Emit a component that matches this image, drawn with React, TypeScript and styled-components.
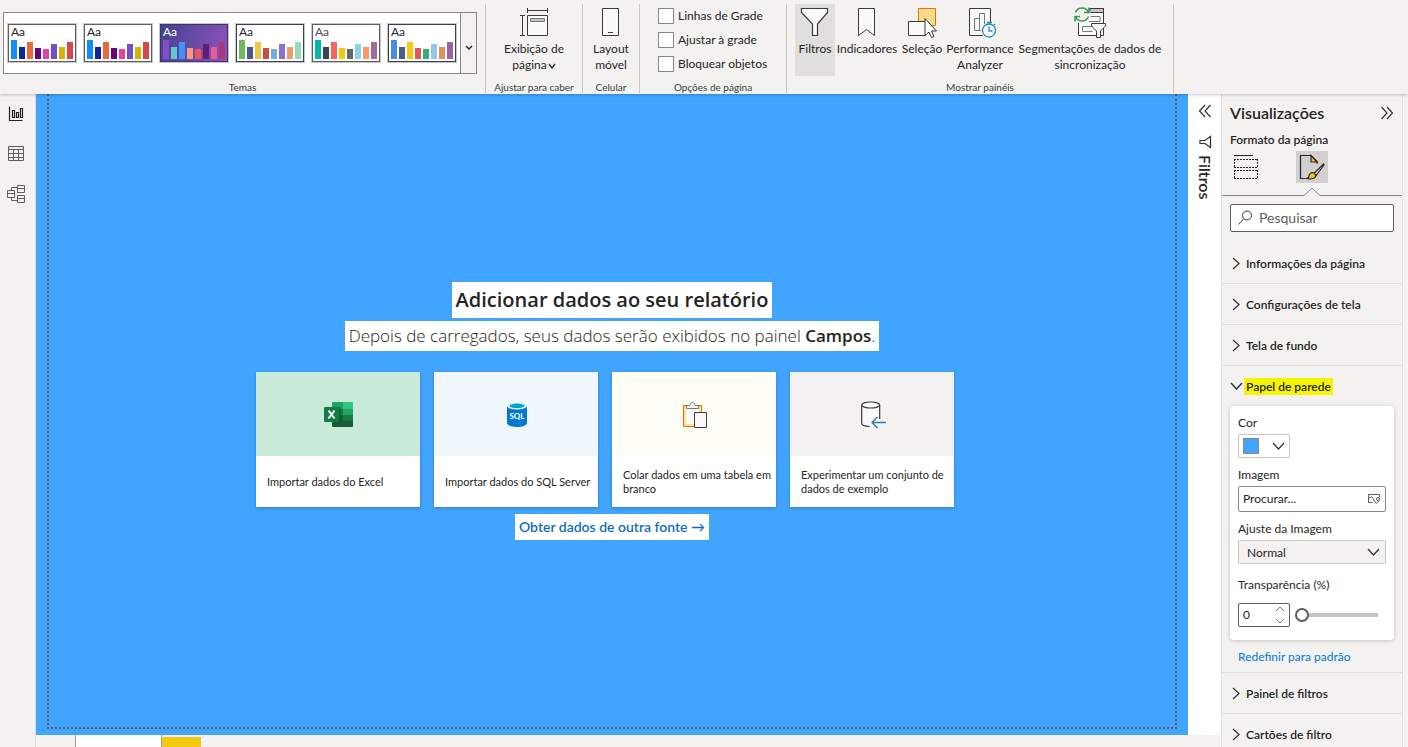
import React, { useState } from "react";
import styled, { createGlobalStyle } from "styled-components";

const GlobalStyle = createGlobalStyle`
  *, *::before, *::after { box-sizing: border-box; }
  body {
    margin: 0;
    background: #f3f2f1;
    color: #252423;
    font-family: Lato, "Open Sans", sans-serif;
    font-size: 12px;
    line-height: 16px;
  }
  button, input, select { font: inherit; color: inherit; margin: 0; }
  button { padding: 0; border: 0; background: none; cursor: pointer; }
  h1, h2, h3, p { margin: 0; font: inherit; }
  svg { display: block; flex: none; }
`;

/* ---------- shell ---------- */

const Shell = styled.div`
  display: flex;
  flex-direction: column;
  height: 100vh;
  overflow: hidden;
`;

const Ribbon = styled.header`
  display: flex;
  flex: none;
  height: 94px;
  padding: 4px 0 1px;
  background: #f3f2f1;
  box-shadow: 0 1px 3px rgba(0, 0, 0, 0.22);
  z-index: 1;
`;

const Workspace = styled.div`
  display: flex;
  flex: 1;
  min-height: 0;
`;

/* ---------- ribbon ---------- */

const Group = styled.section<{ $width: number }>`
  display: flex;
  flex-direction: column;
  flex: none;
  width: ${(p) => p.$width}px;
  border-right: 1px solid #c8c6c4;
`;

const GroupBody = styled.div<{ $pad?: number }>`
  display: flex;
  flex: 1;
  justify-content: center;
  align-items: flex-start;
  padding: 0 ${(p) => p.$pad ?? 0}px;
`;

const GroupTitle = styled.h2`
  height: 12px;
  font-size: 10px;
  line-height: 12px;
  text-align: center;
  white-space: nowrap;
  color: #3b3a39;
`;

const Gallery = styled.div`
  display: flex;
  width: 474px;
  height: 62px;
  margin: 8px 5px 0 0;
  border: 1px solid #8a8886;
  background: #fff;
`;

const GalleryItems = styled.div`
  display: flex;
  flex: 1;
  gap: 6px;
  padding: 10px 3px;
`;

const GalleryMore = styled.button`
  display: flex;
  align-items: center;
  justify-content: center;
  width: 17px;
  padding-top: 8px;
  border-left: 1px solid #8a8886;
  background: #f3f2f1;
`;

const Thumb = styled.button<{ $bg: string; $ink: string; $frame: string }>`
  display: flex;
  flex-direction: column;
  justify-content: space-between;
  width: 70px;
  height: 40px;
  padding: 2px;
  border: 1px solid #c8c6c4;
  box-shadow: inset 0 0 0 1px ${(p) => p.$frame};
  background: ${(p) => p.$bg};
  color: ${(p) => p.$ink};
  font-size: 12px;
  line-height: 12px;
  text-align: left;
`;

const ThumbBars = styled.span`
  display: flex;
  align-items: flex-end;
  gap: 2px;
  height: 20px;
  padding: 0 0 1px 1px;
`;

const ThumbBar = styled.span<{ $h: number; $c: string }>`
  width: 6px;
  height: ${(p) => p.$h}px;
  background: ${(p) => p.$c};
`;

const ThumbText = styled.span`
  height: 12px;
  padding-left: 1px;
`;

const Tool = styled.button<{ $width: number; $active?: boolean }>`
  display: flex;
  flex-direction: column;
  align-items: center;
  flex: none;
  width: ${(p) => p.$width}px;
  height: 72px;
  padding-top: 2px;
  background: ${(p) => (p.$active ? "#e1dfdd" : "transparent")};
`;

const ToolText = styled.span`
  margin-top: 3px;
  line-height: 16px;
  text-align: center;
  white-space: nowrap;

  svg { display: inline-block; margin-left: 1px; }
`;

const Checks = styled.div`
  display: flex;
  flex-direction: column;
  gap: 8px;
  flex: 1;
  min-width: 0;
  padding-top: 4px;
`;

const Check = styled.label`
  display: flex;
  align-items: center;
  gap: 4px;
  height: 16px;
  white-space: nowrap;

  input {
    appearance: none;
    width: 16px;
    height: 16px;
    border: 1px solid #8a8886;
    background: #fff;
  }
  input:checked { background: #605e5c; }
`;

/* ---------- left navigation ---------- */

const Nav = styled.nav`
  display: flex;
  flex-direction: column;
  flex: none;
  width: 36px;
  border-right: 1px solid #e1dfdd;
`;

const NavButton = styled.button`
  display: flex;
  align-items: center;
  padding-left: 6px;
  height: 40px;
`;

/* ---------- report canvas ---------- */

const Center = styled.div`
  display: flex;
  flex-direction: column;
  flex: 1;
  min-width: 0;
`;

const CenterRow = styled.div`
  display: flex;
  flex: 1;
  min-height: 0;
`;

const Canvas = styled.main`
  display: flex;
  flex: 1;
  min-width: 0;
  padding: 0 11px 6px;
  background: #41a4ff;
`;

const Page = styled.div`
  display: flex;
  flex-direction: column;
  align-items: center;
  justify-content: center;
  flex: 1;
  border: 2px dotted #605e5c;
  border-top: 0;
`;

const PageTitle = styled.h1`
  padding: 4px;
  background: #fff;
  font-family: "Open Sans", sans-serif;
  font-size: 20px;
  line-height: 28px;
  font-weight: 600;
`;

const PageLead = styled.p`
  margin-top: 3px;
  padding: 3px 4px;
  background: #fff;
  font-family: "Open Sans", sans-serif;
  font-size: 17px;
  line-height: 24px;
  font-weight: 300;

  strong { font-weight: 600; }
`;

const Cards = styled.div`
  display: flex;
  margin-top: 21px;
`;

const Card = styled.button`
  display: flex;
  flex-direction: column;
  width: 164px;
  height: 135px;
  margin-right: 14px;
  background: #fff;
  text-align: left;
  box-shadow: 0 1px 3px rgba(0, 0, 0, 0.25);
`;

const CardArt = styled.span<{ $bg: string }>`
  display: flex;
  align-items: center;
  justify-content: center;
  width: 100%;
  height: 84px;
  padding: 2px 0 0 2px;
  background: ${(p) => p.$bg};
`;

const CardText = styled.span`
  display: flex;
  align-items: center;
  flex: 1;
  padding: 1px 0 0 11px;
  font-size: 11px;
  line-height: 14px;
  white-space: pre;
`;

const SourceLink = styled.a`
  margin-top: 7px;
  padding: 4px;
  background: #fff;
  color: #0f6cbd;
  font-size: 14px;
  line-height: 18px;
  font-weight: 600;
  text-decoration: none;
`;

const TabBar = styled.footer`
  display: flex;
  flex: none;
  height: 12px;
  padding-left: 39px;
`;

const PageTab = styled.button`
  width: 87px;
  border: solid #a19f9d;
  border-width: 0 1px;
  background: #fff;
`;

const AddTab = styled.button`
  width: 39px;
  margin-top: 2px;
  background: #f2c811;
`;

/* ---------- collapsed filter pane ---------- */

const FilterRail = styled.aside`
  display: flex;
  flex-direction: column;
  align-items: center;
  flex: none;
  width: 33px;
  padding: 10px 0 0 1px;
  background: #fff;
`;

const RailTitle = styled.h2`
  margin-top: 6px;
  font-size: 16px;
  line-height: 20px;
  font-weight: 600;
  writing-mode: vertical-rl;
`;

const FilterGlyph = styled.span`
  margin-top: 17px;
`;

/* ---------- visualizations pane ---------- */

const Pane = styled.aside`
  flex: none;
  width: 182px;
  margin-right: 5px;
  border: solid #e1dfdd;
  border-width: 0 1px;
  overflow: hidden;
`;

const PaneHead = styled.div`
  display: flex;
  align-items: center;
  justify-content: space-between;
  padding: 9px 8px 0;
`;

const PaneTitle = styled.h2`
  font-size: 16px;
  line-height: 20px;
  font-weight: 600;
`;

const PaneSub = styled.p`
  padding: 9px 8px 0;
  font-weight: 600;
`;

const ModeTabs = styled.div`
  display: flex;
  gap: 34px;
  height: 48px;
  padding: 3px 8px 0;
  border-bottom: 1px solid #8a8886;
`;

const ModeTab = styled.button<{ $active?: boolean }>`
  position: relative;
  display: flex;
  align-items: center;
  justify-content: center;
  width: 32px;
  height: 32px;
  background: ${(p) => (p.$active ? "#d2d0ce" : "transparent")};
`;

const Notch = styled.span`
  position: absolute;
  left: 7px;
  top: 36px;
`;

const Search = styled.label`
  display: flex;
  align-items: center;
  gap: 6px;
  height: 28px;
  margin: 8px 8px 11px;
  padding: 0 6px;
  border: 1px solid #605e5c;
  border-radius: 2px;
  background: #fff;

  input {
    flex: 1;
    min-width: 0;
    padding: 0;
    border: 0;
    outline: 0;
    background: none;
    font-size: 14px;
  }
  input::placeholder { color: #605e5c; opacity: 1; }
`;

const Section = styled.section`
  border-bottom: 1px solid #e1dfdd;
`;

const SectionToggle = styled.button`
  display: flex;
  align-items: center;
  gap: 2px;
  width: 100%;
  height: 40px;
  padding-left: 8px;
  font-weight: 600;
  white-space: nowrap;
`;

const SectionName = styled.span<{ $marked?: boolean }>`
  padding: 1px 2px 0;
  background: ${(p) => (p.$marked ? "#f5f500" : "transparent")};
`;

const Options = styled.div`
  display: flex;
  flex-direction: column;
  gap: 9px;
  margin: 0 8px;
  padding: 9px 8px 13px;
  border-radius: 4px;
  background: #fff;
  box-shadow: 0 1px 4px rgba(0, 0, 0, 0.2);
`;

const Field = styled.div<{ $roomy?: boolean }>`
  display: flex;
  flex-direction: column;
  gap: ${(p) => (p.$roomy ? 10 : 3)}px;
  padding-top: ${(p) => (p.$roomy ? 4 : 0)}px;
`;

const ColorButton = styled.button`
  display: flex;
  align-items: center;
  justify-content: space-between;
  width: 52px;
  height: 24px;
  padding: 0 4px;
  border: 1px solid #c8c6c4;
  border-radius: 2px;
  background: #fff;
`;

const Swatch = styled.span`
  width: 16px;
  height: 16px;
  border: 1px solid #8a8886;
  background: #41a4ff;
`;

const Browse = styled.button`
  display: flex;
  align-items: center;
  justify-content: space-between;
  height: 26px;
  padding: 0 4px;
  border: 1px solid #8a8886;
  border-radius: 2px;
  background: #fff;
`;

const SelectBox = styled.div`
  display: grid;
  align-items: center;

  select {
    grid-area: 1 / 1;
    appearance: none;
    height: 24px;
    padding: 1px 8px 0;
    border: 1px solid #c8c6c4;
    border-radius: 2px;
    background: #f3f2f1;
  }
  svg {
    grid-area: 1 / 1;
    justify-self: end;
    margin-right: 6px;
    pointer-events: none;
  }
`;

const SliderRow = styled.div`
  display: flex;
  align-items: center;
  gap: 5px;
`;

const Stepper = styled.div`
  display: flex;
  align-items: center;
  width: 52px;
  height: 24px;
  padding: 0 4px;
  border: 1px solid #605e5c;
  border-radius: 2px;

  input {
    width: 32px;
    padding: 0;
    border: 0;
    outline: 0;
    appearance: textfield;
  }
  input::-webkit-inner-spin-button { appearance: none; }
`;

const Steps = styled.div`
  display: flex;
  flex-direction: column;
  gap: 6px;
`;

const Range = styled.input`
  appearance: none;
  flex: 1;
  min-width: 0;
  height: 16px;
  margin-right: 8px;
  background: none;

  &::-webkit-slider-runnable-track {
    height: 4px;
    background: #c8c6c4;
  }
  &::-webkit-slider-thumb {
    appearance: none;
    width: 14px;
    height: 14px;
    margin-top: -5px;
    border: 2px solid #605e5c;
    border-radius: 50%;
    background: #fff;
  }
`;

const ResetLink = styled.a`
  display: block;
  padding: 9px 16px 7px;
  color: #0078d4;
  text-decoration: none;
`;

/* ---------- icons ---------- */

type ChevronProps = { dir: "up" | "down" | "right"; w: number; h: number; color?: string; stroke?: number };

const Chevron = ({ dir, w, h, color = "#323130", stroke = 1.2 }: ChevronProps) => {
  const pts = {
    up: `1,${h - 1} ${w / 2},1 ${w - 1},${h - 1}`,
    down: `1,1 ${w / 2},${h - 1} ${w - 1},1`,
    right: `1,1 ${w - 1},${h / 2} 1,${h - 1}`,
  }[dir];
  return (
    <svg width={w} height={h} fill="none" stroke={color} strokeWidth={stroke}>
      <polyline points={pts} />
    </svg>
  );
};

const DoubleChevron = ({ left }: { left?: boolean }) => (
  <svg width="14" height="14" viewBox="0 0 14 14" fill="none" stroke="#323130" strokeWidth="1.2">
    <path d={left ? "M7 1L1.500 7L7 13M12.500 1L7 7L12.500 13" : "M1.500 1L7 7L1.500 13M7 1L12.500 7L7 13"} />
  </svg>
);

const Art = ({ w = 32, children }: { w?: number; children: React.ReactNode }) => (
  <svg width={w} height="32" viewBox={`0 0 ${w} 32`} fill="none" stroke="#3b3a39">
    {children}
  </svg>
);

const PageViewIcon = () => (
  <Art>
    <path d="M9.500 2v5M29.500 2v5M9.500 4.500h20M2 9.500h5M2 29.500h5M4.500 9.500v20" />
    <path fill="#fafafa" d="M9.500 9.500h20v20h-20z" />
    <path fill="#c8c6c4" stroke="#797775" d="M12.500 12.500h14v3h-14z" />
  </Art>
);

const PhoneIcon = () => (
  <Art>
    <path fill="#fafafa" d="M7.500 2.500h16v27h-16z" />
    <path d="M13 26.500h5" />
  </Art>
);

const FunnelIcon = () => (
  <Art>
    <path fill="#fafafa" strokeWidth="1.2" d="M2.500 2.500h26v4L18.500 18v11.500h-5V18L2.500 6.500z" />
  </Art>
);

const BookmarkIcon = () => (
  <Art>
    <path fill="#fafafa" d="M7.500 2.500h16v27l-8-6-8 6z" />
  </Art>
);

const SelectionIcon = () => (
  <Art>
    <path fill="#f8db8f" stroke="#e07000" d="M12.500 2.500h17v17h-17z" />
    <path fill="#fafafa" d="M2.500 15.500h17v14h-17z" />
    <path fill="#fff" d="M19 12.500v17l4-3.500 2.500 5.500 2.500-1-2.500-5.500h5z" />
  </Art>
);

const PerformanceIcon = () => (
  <Art>
    <path fill="#fafafa" d="M5.500 2.500h21v27h-21z" />
    <path stroke="#797775" d="M10.500 24.500v-12h5v12zM15.500 24.500v-17h5v17z" />
    <circle cx="25" cy="24.500" r="8" fill="#fafafa" stroke="none" />
    <circle cx="25" cy="24.500" r="6.500" stroke="#1e8bcd" strokeWidth="1.300" />
    <path stroke="#1e8bcd" strokeWidth="1.300" d="M23 16.500h5M25.500 16.500v2M25 20.500v4.500h3.500M29.500 19.500l1.500-1.500" />
  </Art>
);

const SyncIcon = () => (
  <Art w={34}>
    <path fill="#fafafa" d="M5.500 2.500h25v27h-25z" />
    <path fill="#c8c6c4" d="M17 2.500h13.500v4H17z" />
    <path stroke="#797775" d="M17 10.500h10v5H16M22 20.500H9.500v5h10" />
    <circle cx="9" cy="8.500" r="9" fill="#f3f2f1" stroke="none" />
    <path stroke="#2f9e4f" strokeWidth="1.500" d="M2.500 6.500A7 7 0 0 1 15.500 6.500M15.500 10.500A7 7 0 0 1 2.500 10.500M16 1.500v5h-5M2 15.500v-5h5" />
    <path fill="#fafafa" d="M18.500 17.500h14v2.500l-5 5v6.500h-4V25l-5-5z" />
  </Art>
);

const ReportIcon = () => (
  <svg width="18" height="18" fill="none" stroke="#252423" strokeWidth="1.200">
    <path d="M3.500 1.500v14h13M6.500 5.500h2v7h-2zM10.500 7.500h2v5h-2zM14.500 3.500h2v9h-2z" />
  </svg>
);

const TableIcon = () => (
  <svg width="18" height="18" fill="none" stroke="#605e5c">
    <path d="M2.500 1.500h15v14h-15zM2.500 4.500h15M2.500 8.500h15M2.500 12.500h15M7.500 4.500v11M12.500 4.500v11" />
  </svg>
);

const ModelIcon = () => (
  <svg width="20" height="20" fill="none" stroke="#605e5c">
    <path d="M1.500 6.500h7v7h-7zM1.500 9.500h7M11.500 1.500h7v7h-7zM11.500 4.500h7M11.500 11.500h7v7h-7zM11.500 14.500h7M5.500 6.500v-3h6M5.500 13.500v3h6" />
  </svg>
);

const ExcelIcon = () => (
  <svg width="30" height="26" viewBox="0 0 30 26">
    <path fill="#21a366" d="M8 1q0-1 1-1h10v7H8z" />
    <path fill="#33c481" d="M19 0h9q1 0 1 1v6H19z" />
    <path fill="#107c41" d="M8 7h11v6H8zM19 13h10v6H19z" />
    <path fill="#21a366" d="M19 7h10v6H19z" />
    <path fill="#185c37" d="M8 13h11v6h10v5q0 1-1 1H9q-1 0-1-1z" />
    <path fill="#0b5a2e" opacity=".6" d="M8 5h8q1 0 1 1v14q0 1-1 1H8z" />
    <rect y="5" width="15" height="15" rx="1" fill="#107c41" />
    <path stroke="#fff" strokeWidth="2" d="M4.500 8.500l6 8M10.500 8.500l-6 8" />
  </svg>
);

const SqlIcon = () => (
  <svg width="22" height="26" viewBox="0 0 22 26">
    <path fill="#0078d4" d="M1 4v17c0 2 4 4 10 4s10-2 10-4V4z" />
    <ellipse cx="11" cy="4" rx="10" ry="3.500" fill="#e6f2fb" />
    <ellipse cx="11" cy="3.800" rx="7.500" ry="2.300" fill="#00a5cf" />
    <text x="11" y="17" textAnchor="middle" fontSize="8" fontWeight="700" fill="#fff">SQL</text>
  </svg>
);

const PasteIcon = () => (
  <svg width="26" height="28" viewBox="0 0 26 28" fill="none">
    <path fill="#fbe0a0" stroke="#e07000" d="M1.500 4.500h18v21h-18z" />
    <path fill="#fafafa" d="M4 7h13v16H4z" />
    <path fill="#fafafa" stroke="#797775" d="M4.500 7.500v-3h3.500c0-4 5-4 5 0h3.500v3z" />
    <path fill="#fafafa" stroke="#3b3a39" d="M12.500 11.500h12v15h-12z" />
  </svg>
);

const SampleIcon = () => (
  <svg width="27" height="28" viewBox="0 0 27 28" fill="none" stroke="#3b3a39" strokeWidth="1.200">
    <path fill="#fafafa" d="M2 4v18c0 2 4 3.500 9 3.500s9-1.500 9-3.500V4z" stroke="none" />
    <path d="M1.700 4v18c0 2 3.500 3.300 8 3.500M19.700 4v14" />
    <ellipse cx="10.700" cy="4" rx="9" ry="3" fill="#fafafa" />
    <path stroke="#2b7cab" strokeWidth="1.400" d="M26 21.500H12M17.500 16L12 21.500l5.500 5.500" />
  </svg>
);

const BuildIcon = () => (
  <svg width="26" height="26" fill="none" stroke="#252423">
    <path d="M1 1.500h19" />
    <path strokeDasharray="2 1" d="M1 5.500h24M1 13.500h24M1 16.500h24M1 24.500h24M1.500 5v9M24.500 5v9M1.500 16v9M24.500 16v9" />
  </svg>
);

const FormatIcon = () => (
  <svg width="26" height="26" fill="none" stroke="#252423" strokeWidth="1.200">
    <path d="M6 24.500H1.500v-23H12l6 6V10" />
    <path fill="#f2c811" d="M12 1.500v6.500h6z" />
    <path fill="#fafafa" d="M24.500 10L15 19.500l2 2L25 11z" />
    <path fill="#f2c811" d="M15 19c-3-1-5 1-5 3s-1 2-2.500 2.500c5 1 9 0 9.500-3z" />
  </svg>
);

const NotchIcon = () => (
  <svg width="18" height="9" fill="#f3f2f1" stroke="#8a8886">
    <path stroke="none" d="M1 9L9 1l8 8z" />
    <path d="M1 8.500L9 1l8 7.500" />
  </svg>
);

const MagnifierIcon = () => (
  <svg width="16" height="16" fill="none" stroke="#3b3a39">
    <circle cx="10" cy="5.500" r="4.500" />
    <path d="M6.500 9L1.500 14.500" />
  </svg>
);

const SideFunnel = () => (
  <svg width="14" height="14" fill="none" stroke="#323130" strokeWidth="1.200">
    <path d="M12.500 1.500v11L7 8.500H2v-3h5z" />
  </svg>
);

const PictureIcon = () => (
  <svg width="14" height="12" fill="none" stroke="#605e5c">
    <path d="M5.500 9.500H1.500v-8h11v3M1.500 5.500l3-2 3 4.500 1.500 2.500 3.500-3" />
    <circle cx="11" cy="6" r="1.500" />
  </svg>
);

/* ---------- data ---------- */

const barHeights = [19, 12, 17, 11, 10, 15, 12, 17];

const vivid = ["#118dff", "#12239e", "#e66c37", "#6b007b", "#e044a7", "#744ec2", "#d9b300", "#d64550"];

const themes = [
  { bg: "#fff", ink: "#252423", frame: "#605e5c", bars: vivid },
  { bg: "#fff", ink: "#252423", frame: "#605e5c", bars: vivid },
  {
    bg: "linear-gradient(110deg, #41438e, #9352bd)", ink: "#fff", frame: "#3a3470",
    bars: ["#8250c4", "#5ecbc8", "#438fff", "#ff977e", "#eb5757", "#5b2071", "#ec5a96", "#a43b76"],
  },
  {
    bg: "#fff", ink: "#1f2340", frame: "#3b4058",
    bars: ["#73b761", "#4a588a", "#ecc846", "#cd4c46", "#71afe2", "#8d6fd1", "#ee9e64", "#95dabb"],
  },
  {
    bg: "#fff", ink: "#4a4a4a", frame: "#605e5c",
    bars: ["#01b8aa", "#374649", "#fd625e", "#f2c80f", "#5f6b6d", "#8ad4eb", "#fe9666", "#a66999"],
  },
  {
    bg: "#fff", ink: "#1f2340", frame: "#3b4058",
    bars: ["#4a8ddc", "#4c5d8a", "#f3c911", "#dc5b57", "#33ae81", "#95c8f0", "#dd915f", "#9b649f"],
  },
];

const sources = [
  { bg: "#c9ead8", icon: <ExcelIcon />, text: "Importar dados do Excel" },
  { bg: "#eff6fc", icon: <SqlIcon />, text: "Importar dados do SQL Server" },
  { bg: "#fefef6", icon: <PasteIcon />, text: "Colar dados em uma tabela em\nbranco" },
  { bg: "#f3f2f1", icon: <SampleIcon />, text: "Experimentar um conjunto de\ndados de exemplo" },
];

/* ---------- parts ---------- */

const SlotChevron = styled.span`
  display: flex;
  justify-content: center;
  width: 12px;
`;

const ClosedSection = ({ name }: { name: string }) => (
  <Section>
    <h3>
      <SectionToggle aria-expanded={false}>
        <SlotChevron><Chevron dir="right" w={8} h={13} /></SlotChevron>
        <SectionName>{name}</SectionName>
      </SectionToggle>
    </h3>
  </Section>
);

export default function App() {
  const [level, setLevel] = useState(0);
  const change = (n: number) => setLevel(Math.max(0, Math.min(100, n)));

  return (
    <>
      <GlobalStyle />
      <Shell>
        <Ribbon>
          <Group $width={486}>
            <GroupBody>
              <Gallery>
                <GalleryItems>
                  {themes.map((t, i) => (
                    <Thumb key={i} $bg={t.bg} $ink={t.ink} $frame={t.frame}>
                      <ThumbText>Aa</ThumbText>
                      <ThumbBars>
                        {t.bars.map((c, j) => <ThumbBar key={j} $h={barHeights[j]} $c={c} />)}
                      </ThumbBars>
                    </Thumb>
                  ))}
                </GalleryItems>
                <GalleryMore aria-label="Mais temas"><Chevron dir="down" w={8} h={5} stroke={1.5} /></GalleryMore>
              </Gallery>
            </GroupBody>
            <GroupTitle>Temas</GroupTitle>
          </Group>
          <Group $width={97}>
            <GroupBody>
              <Tool $width={80}>
                <PageViewIcon />
                <ToolText>Exibição de<br />página<Chevron dir="down" w={8} h={6} stroke={1.5} /></ToolText>
              </Tool>
            </GroupBody>
            <GroupTitle>Ajustar para caber</GroupTitle>
          </Group>
          <Group $width={57}>
            <GroupBody>
              <Tool $width={48}>
                <PhoneIcon />
                <ToolText>Layout<br />móvel</ToolText>
              </Tool>
            </GroupBody>
            <GroupTitle>Celular</GroupTitle>
          </Group>
          <Group $width={147}>
            <GroupBody $pad={18}>
              <Checks>
                <Check><input type="checkbox" />Linhas de Grade</Check>
                <Check><input type="checkbox" />Ajustar à grade</Check>
                <Check><input type="checkbox" />Bloquear objetos</Check>
              </Checks>
            </GroupBody>
            <GroupTitle>Opções de página</GroupTitle>
          </Group>
          <Group $width={387}>
            <GroupBody>
              <Tool $width={40} $active><FunnelIcon /><ToolText>Filtros</ToolText></Tool>
              <Tool $width={64}><BookmarkIcon /><ToolText>Indicadores</ToolText></Tool>
              <Tool $width={46}><SelectionIcon /><ToolText>Seleção</ToolText></Tool>
              <Tool $width={70}><PerformanceIcon /><ToolText>Performance<br />Analyzer</ToolText></Tool>
              <Tool $width={150}><SyncIcon /><ToolText>Segmentações de dados de<br />sincronização</ToolText></Tool>
            </GroupBody>
            <GroupTitle>Mostrar painéis</GroupTitle>
          </Group>
        </Ribbon>

        <Workspace>
          <Nav>
            <NavButton aria-label="Relatório"><ReportIcon /></NavButton>
            <NavButton aria-label="Dados"><TableIcon /></NavButton>
            <NavButton aria-label="Modelo"><ModelIcon /></NavButton>
          </Nav>

          <Center>
            <CenterRow>
              <Canvas>
                <Page>
                  <PageTitle>Adicionar dados ao seu relatório</PageTitle>
                  <PageLead>Depois de carregados, seus dados serão exibidos no painel <strong>Campos</strong>.</PageLead>
                  <Cards>
                    {sources.map((s) => (
                      <Card key={s.text}>
                        <CardArt $bg={s.bg}>{s.icon}</CardArt>
                        <CardText>{s.text}</CardText>
                      </Card>
                    ))}
                  </Cards>
                  <SourceLink href="#fontes">Obter dados de outra fonte →</SourceLink>
                </Page>
              </Canvas>
              <FilterRail>
                <button aria-label="Expandir filtros"><DoubleChevron left /></button>
                <FilterGlyph><SideFunnel /></FilterGlyph>
                <RailTitle>Filtros</RailTitle>
              </FilterRail>
            </CenterRow>
            <TabBar>
              <PageTab aria-label="Página 1" />
              <AddTab aria-label="Nova página" />
            </TabBar>
          </Center>

          <Pane>
            <PaneHead>
              <PaneTitle>Visualizações</PaneTitle>
              <button aria-label="Recolher painel"><DoubleChevron /></button>
            </PaneHead>
            <PaneSub>Formato da página</PaneSub>
            <ModeTabs>
              <ModeTab aria-label="Criar visual"><BuildIcon /></ModeTab>
              <ModeTab aria-label="Formatar página" $active>
                <FormatIcon />
                <Notch><NotchIcon /></Notch>
              </ModeTab>
            </ModeTabs>
            <Search>
              <MagnifierIcon />
              <input type="text" aria-label="Pesquisar" placeholder="Pesquisar" />
            </Search>
            <ClosedSection name="Informações da página" />
            <ClosedSection name="Configurações de tela" />
            <ClosedSection name="Tela de fundo" />
            <Section>
              <h3>
                <SectionToggle aria-expanded>
                  <SlotChevron><Chevron dir="down" w={13} h={8} stroke={1.5} /></SlotChevron>
                  <SectionName $marked>Papel de parede</SectionName>
                </SectionToggle>
              </h3>
              <Options>
                <Field>
                  <label htmlFor="cor">Cor</label>
                  <ColorButton id="cor"><Swatch /><Chevron dir="down" w={13} h={8} /></ColorButton>
                </Field>
                <Field>
                  <label htmlFor="imagem">Imagem</label>
                  <Browse id="imagem">Procurar...<PictureIcon /></Browse>
                </Field>
                <Field>
                  <label htmlFor="ajuste">Ajuste da Imagem</label>
                  <SelectBox>
                    <select id="ajuste" defaultValue="Normal">
                      <option>Normal</option>
                      <option>Ajustar</option>
                      <option>Preencher</option>
                    </select>
                    <Chevron dir="down" w={13} h={8} />
                  </SelectBox>
                </Field>
                <Field $roomy>
                  <label htmlFor="transparencia">Transparência (%)</label>
                  <SliderRow>
                    <Stepper>
                      <input id="transparencia" type="number" value={level} onChange={(e) => change(Number(e.target.value))} />
                      <Steps>
                        <button aria-label="Aumentar" onClick={() => change(level + 1)}><Chevron dir="up" w={10} h={6} color="#797775" stroke={1} /></button>
                        <button aria-label="Diminuir" onClick={() => change(level - 1)}><Chevron dir="down" w={10} h={6} color="#797775" stroke={1} /></button>
                      </Steps>
                    </Stepper>
                    <Range type="range" aria-label="Transparência" min={0} max={100} value={level} onChange={(e) => change(Number(e.target.value))} />
                  </SliderRow>
                </Field>
              </Options>
              <ResetLink href="#redefinir">Redefinir para padrão</ResetLink>
            </Section>
            <ClosedSection name="Painel de filtros" />
            <ClosedSection name="Cartões de filtro" />
          </Pane>
        </Workspace>
      </Shell>
    </>
  );
}
